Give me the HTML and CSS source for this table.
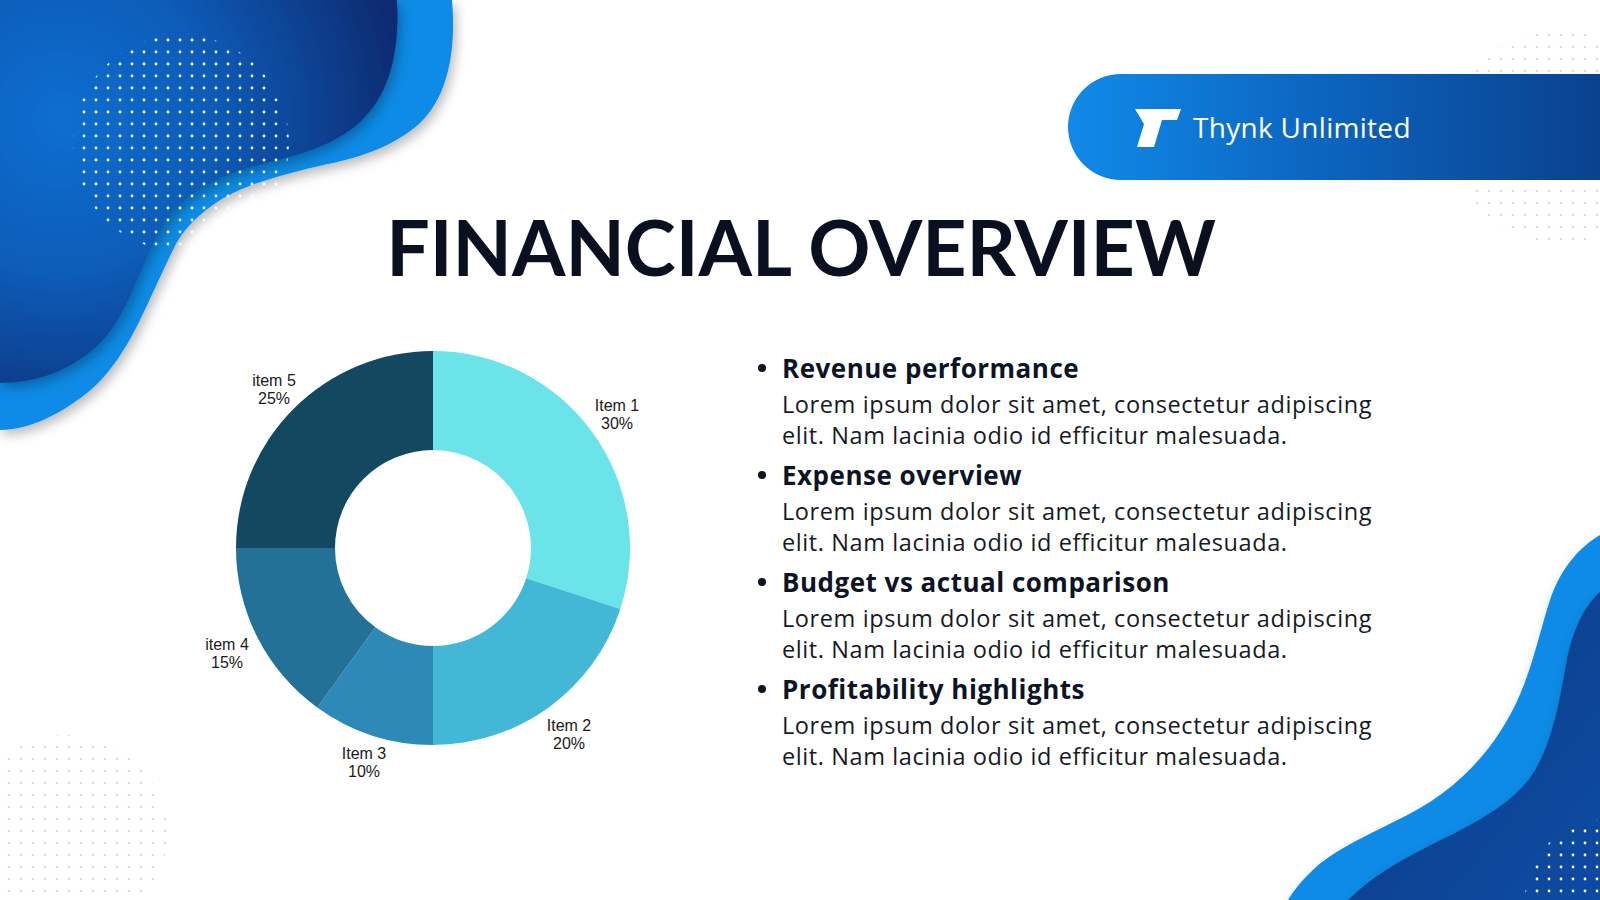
FILE: index.html
```html
<!DOCTYPE html>
<html lang="en">
<head>
<meta charset="utf-8">
<title>Financial Overview</title>
<link rel="stylesheet" href="styles.css">
</head>
<body>
<div class="slide">
  <svg class="decor" width="1600" height="900" viewBox="0 0 1600 900" aria-hidden="true">
    <defs>
      <filter id="sh" x="-20%" y="-20%" width="140%" height="140%">
        <feDropShadow dx="3" dy="5" stdDeviation="6" flood-color="#000" flood-opacity="0.28"/>
      </filter>
      <radialGradient id="gTL" gradientUnits="userSpaceOnUse" cx="60" cy="120" r="340">
        <stop offset="0" stop-color="#0c6fd0"/>
        <stop offset="0.45" stop-color="#0a5cb8"/>
        <stop offset="1" stop-color="#0a2c72"/>
      </radialGradient>
      <linearGradient id="gBR" x1="0" y1="0" x2="1" y2="1">
        <stop offset="0" stop-color="#0a3a86"/>
        <stop offset="1" stop-color="#0b4ba2"/>
      </linearGradient>
      <pattern id="pW" patternUnits="userSpaceOnUse" x="-6" y="-2" width="12" height="12">
        <circle cx="6" cy="6" r="1.4" fill="#ffffff"/>
      </pattern>
      <pattern id="pW2" patternUnits="userSpaceOnUse" x="-5" y="-3" width="12" height="12">
        <circle cx="6" cy="6" r="1.4" fill="#ffffff"/>
      </pattern>
      <pattern id="pG1" patternUnits="userSpaceOnUse" x="3" y="-3" width="12" height="12">
        <circle cx="6" cy="6" r="1.3" fill="#dcdcdc"/>
      </pattern>
      <pattern id="pG2" patternUnits="userSpaceOnUse" x="-5" y="5" width="12" height="12">
        <circle cx="6" cy="6" r="1.3" fill="#dcdcdc"/>
      </pattern>
    </defs>

    <!-- faint grey dot fields -->
    <circle cx="67" cy="835" r="100" fill="url(#pG1)"/>
    <circle cx="1560" cy="137" r="107" fill="url(#pG2)"/>

    <!-- top-left wave -->
    <path filter="url(#sh)" fill="#108be6"
      d="M0 0 L452 0 C456 45 450 95 420 123 C395 146 360 157 333 163 C300 170 260 180 233 193 C205 207 183 228 173 250 C162 272 150 300 140 320 C128 345 110 375 87 393 C62 413 30 430 0 430 Z"/>
    <path filter="url(#sh)" fill="url(#gTL)"
      d="M0 0 L397 0 C400 50 390 95 360 122 C335 145 300 155 270 162 C235 170 205 183 185 200 C160 222 148 255 137 280 C125 310 112 335 90 352 C65 372 35 383 0 383 Z"/>
    <circle cx="181" cy="143" r="108" fill="url(#pW)"/>

    <!-- bottom-right wave -->
    <path filter="url(#sh)" fill="#108be6"
      d="M1600 535 C1578 548 1560 570 1550 600 C1540 630 1530 680 1510 715 C1490 752 1460 785 1420 808 C1385 828 1340 845 1315 868 C1302 880 1294 890 1288 900 L1600 900 Z"/>
    <path filter="url(#sh)" fill="url(#gBR)"
      d="M1600 592 C1585 605 1572 630 1566 665 C1558 710 1550 750 1530 778 C1505 810 1465 828 1425 848 C1395 863 1368 880 1348 900 L1600 900 Z"/>
    <circle cx="1605" cy="900" r="80" fill="url(#pW2)"/>
  </svg>

  <div class="content">
    <header class="header">
      <div class="brand">
        <svg class="logo" width="46" height="38" viewBox="0 0 46 38" aria-hidden="true">
          <path d="M0 0 H46 L42 11 H27 L19 38 H2 L9 15 Z" fill="#ffffff"/>
        </svg>
        <span class="brand-name">Thynk Unlimited</span>
      </div>
    </header>

    <h1 class="title">FINANCIAL OVERVIEW</h1>

    <main class="main">
      <div class="chart">
        <svg width="520" height="480" viewBox="0 0 520 480" role="img" aria-label="Donut chart">
          <path fill="#6ae4e8" d="M260 33 A197 197 0 0 1 447.36 290.88 L353.20 260.28 A98 98 0 0 0 260 132 Z"/>
          <path fill="#42b7d6" d="M447.36 290.88 A197 197 0 0 1 260 427 L260 328 A98 98 0 0 0 353.20 260.28 Z"/>
          <path fill="#2d8ab7" d="M260 427 A197 197 0 0 1 144.21 389.38 L202.40 309.28 A98 98 0 0 0 260 328 Z"/>
          <path fill="#237196" d="M144.21 389.38 A197 197 0 0 1 63 230 L162 230 A98 98 0 0 0 202.40 309.28 Z"/>
          <path fill="#124860" d="M63 230 A197 197 0 0 1 260 33 L260 132 A98 98 0 0 0 162 230 Z"/>
        </svg>
        <div class="label label-1">Item 1<br>30%</div>
        <div class="label label-2">Item 2<br>20%</div>
        <div class="label label-3">Item 3<br>10%</div>
        <div class="label label-4">item 4<br>15%</div>
        <div class="label label-5">item 5<br>25%</div>
      </div>

      <ul class="points">
        <li class="point">
          <h2 class="point-title"><span class="dot"></span>Revenue performance</h2>
          <p class="point-text">Lorem ipsum dolor sit amet, consectetur adipiscing elit. Nam lacinia odio id efficitur malesuada.</p>
        </li>
        <li class="point">
          <h2 class="point-title"><span class="dot"></span>Expense overview</h2>
          <p class="point-text">Lorem ipsum dolor sit amet, consectetur adipiscing elit. Nam lacinia odio id efficitur malesuada.</p>
        </li>
        <li class="point">
          <h2 class="point-title"><span class="dot"></span>Budget vs actual comparison</h2>
          <p class="point-text">Lorem ipsum dolor sit amet, consectetur adipiscing elit. Nam lacinia odio id efficitur malesuada.</p>
        </li>
        <li class="point">
          <h2 class="point-title"><span class="dot"></span>Profitability highlights</h2>
          <p class="point-text">Lorem ipsum dolor sit amet, consectetur adipiscing elit. Nam lacinia odio id efficitur malesuada.</p>
        </li>
      </ul>
    </main>
  </div>
</div>
</body>
</html>
```

FILE: styles.css
```css
html, body {
  margin: 0;
  padding: 0;
  background: #ffffff;
}

.slide {
  position: relative;
  width: 1600px;
  height: 900px;
  overflow: hidden;
  background: #ffffff;
  font-family: "Open Sans", "Noto Sans", sans-serif;
}

.decor {
  position: absolute;
  left: 0;
  top: 0;
  z-index: 0;
}

.content {
  position: relative;
  z-index: 1;
  display: flex;
  flex-direction: column;
}

.header {
  display: flex;
  justify-content: flex-end;
  padding-top: 74px;
}

.brand {
  width: 532px;
  height: 106px;
  box-sizing: border-box;
  padding-left: 67px;
  border-radius: 53px 0 0 53px;
  background: linear-gradient(90deg, #108ae8 0%, #0b63bd 50%, #0a418e 100%);
  display: flex;
  align-items: center;
  gap: 12px;
}

.logo {
  display: block;
  margin-top: 2px;
}

.brand-name {
  color: #ffffff;
  font-family: "Open Sans", sans-serif;
  font-size: 28px;
  font-weight: 400;
  letter-spacing: 0.3px;
}

.title {
  margin: 28px 0 0;
  text-align: center;
  font-family: "Lato", "Open Sans", sans-serif;
  font-weight: 700;
  font-size: 77px;
  line-height: 1;
  color: #0a1020;
  letter-spacing: 0;
  padding-left: 2px;
}

.main {
  display: flex;
  align-items: flex-start;
  margin-top: 33px;
  padding-left: 173px;
}

.chart {
  position: relative;
  width: 520px;
  height: 480px;
  flex: none;
}

.chart svg {
  display: block;
}

.label {
  position: absolute;
  transform: translateX(-50%);
  text-align: center;
  white-space: nowrap;
  font-family: "Liberation Sans", Arial, sans-serif;
  font-size: 16px;
  line-height: 18.5px;
  color: #1a1a1a;
}

.label-1 { left: 444px; top: 78.5px; }
.label-2 { left: 396px; top: 398.5px; }
.label-3 { left: 191px; top: 426.5px; }
.label-4 { left: 54px;  top: 317.5px; }
.label-5 { left: 101px; top: 53.5px; }

.points {
  list-style: none;
  margin: 32px 0 0 65px;
  padding: 0;
  display: flex;
  flex-direction: column;
  gap: 6px;
}

.point-title {
  margin: 0;
  display: flex;
  align-items: center;
  font-family: "Open Sans", sans-serif;
  font-weight: 700;
  font-size: 26px;
  line-height: 36px;
  letter-spacing: 0.5px;
  color: #0c1426;
}

.dot {
  width: 8px;
  height: 8px;
  border-radius: 50%;
  background: #0c1426;
  margin-right: 16px;
  flex: none;
}

.point-text {
  margin: 3px 0 0;
  padding-left: 24px;
  width: 605px;
  font-family: "Open Sans", sans-serif;
  font-size: 23.5px;
  line-height: 31px;
  letter-spacing: 0.6px;
  color: #151a25;
}
```
